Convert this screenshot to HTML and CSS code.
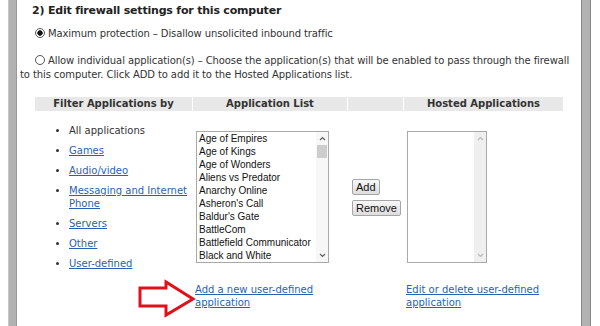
FILE: index.html
```html
<!DOCTYPE html>
<html lang="en">
<head>
  <meta charset="UTF-8" />
  <meta name="viewport" content="width=device-width, initial-scale=1.0" />
  <title>Firewall Settings</title>
  <link rel="stylesheet" href="styles.css">
</head>
<body>
  <div class="page">
    <div class="rail"></div>
    <div class="panel">
      <h2 class="step-title">2) Edit firewall settings for this computer</h2>
      <p class="option"><span class="radio checked"></span>Maximum protection – Disallow unsolicited inbound traffic</p>
      <p class="option second"><span class="radio"></span>Allow individual application(s) – Choose the application(s) that will be enabled to pass through the firewall<br>to this computer. Click ADD to add it to the Hosted Applications list.</p>

      <div class="apps">
        <div class="head">Filter Applications by</div>
        <div class="head">Application List</div>
        <div class="head"></div>
        <div class="head">Hosted Applications</div>

        <ul class="filters">
          <li>All applications</li>
          <li><a href="#">Games</a></li>
          <li><a href="#">Audio/video</a></li>
          <li><a href="#">Messaging and Internet Phone</a></li>
          <li><a href="#">Servers</a></li>
          <li><a href="#">Other</a></li>
          <li><a href="#">User-defined</a></li>
        </ul>

        <div class="listbox app-list">
          <div class="items">
            <div>Age of Empires</div>
            <div>Age of Kings</div>
            <div>Age of Wonders</div>
            <div>Aliens vs Predator</div>
            <div>Anarchy Online</div>
            <div>Asheron's Call</div>
            <div>Baldur's Gate</div>
            <div>BattleCom</div>
            <div>Battlefield Communicator</div>
            <div>Black and White</div>
          </div>
          <div class="scroll">
            <span class="arrow"><svg width="7" height="5" viewBox="0 0 7 5"><path d="M1 4 L3.5 1.5 L6 4" /></svg></span>
            <span class="thumb"></span>
            <span class="spacer"></span>
            <span class="arrow"><svg width="7" height="5" viewBox="0 0 7 5"><path d="M1 1 L3.5 3.5 L6 1" /></svg></span>
          </div>
        </div>

        <div class="moves">
          <button>Add</button>
          <button>Remove</button>
        </div>

        <div class="listbox hosted">
          <div class="items"></div>
          <div class="scroll disabled">
            <span class="arrow"><svg width="7" height="5" viewBox="0 0 7 5"><path d="M1 4 L3.5 1.5 L6 4" /></svg></span>
            <span class="spacer"></span>
            <span class="arrow"><svg width="7" height="5" viewBox="0 0 7 5"><path d="M1 1 L3.5 3.5 L6 1" /></svg></span>
          </div>
        </div>

        <div class="pointer">
          <svg width="60" height="42" viewBox="0 0 60 42">
            <polygon points="3,10 29,10 29,4 56,21 29,37 29,28 3,28" />
          </svg>
        </div>
        <a class="more" href="#">Add a new user-defined application</a>
        <div></div>
        <a class="more" href="#">Edit or delete user-defined application</a>
      </div>
    </div>
    <div class="rail right"></div>
  </div>
</body>
</html>
```

FILE: styles.css
```css
body {
  margin: 0;
  font-family: "DejaVu Sans", sans-serif;
  font-size: 10px;
  color: #333;
  background: #fff;
}
a {
  color: #2b5fb4;
}
.page {
  display: flex;
  height: 326px;
  padding-left: 8px;
}
.rail {
  width: 7px;
  background: #b2b2b2;
  border-left: 1px solid #c6c6c6;
  border-right: 1px solid #999;
}
.rail.right {
  width: 8px;
  border-left: 1px solid #888;
  border-right: 1px solid #888;
}
.panel {
  width: 561px;
  padding: 4px 0 0 3px;
}
.step-title {
  margin: 0 0 0 12px;
  font-size: 11px;
  font-weight: bold;
  letter-spacing: -0.2px;
  line-height: 14px;
  color: #222;
}
.option {
  margin: 9px 0 0;
  text-indent: 15px;
  line-height: 14px;
  white-space: nowrap;
  letter-spacing: -0.1px;
}
.option.second {
  margin-top: 13px;
}
.radio {
  display: inline-block;
  box-sizing: border-box;
  width: 10px;
  height: 10px;
  margin-right: 3px;
  border: 1px solid #555;
  border-radius: 50%;
  background: #fff;
  vertical-align: -1px;
}
.radio.checked {
  background: radial-gradient(circle, #111 2.4px, #fff 3px);
}
.apps {
  display: grid;
  grid-template-columns: 157px 154px 55px 159px;
  column-gap: 1px;
  margin: 15px 0 0 15px;
}
.head {
  height: 14px;
  line-height: 14px;
  background: #e8e8e8;
  font-weight: bold;
  text-align: center;
}
.filters {
  margin: 13px 0 0;
  padding-left: 34px;
  line-height: 13px;
}
.filters li + li {
  margin-top: 7px;
}
.listbox {
  display: flex;
  box-sizing: border-box;
  height: 132px;
  margin: 20px 0 0 3px;
  border: 1px solid #a9a9a9;
  background: #fff;
}
.app-list {
  width: 133px;
}
.hosted {
  width: 80px;
}
.items {
  flex: 1;
  overflow: hidden;
  padding-left: 2px;
  font-family: "Liberation Sans", Arial, sans-serif;
  font-size: 10px;
  line-height: 13px;
  color: #111;
  white-space: nowrap;
}
.scroll {
  display: flex;
  flex-direction: column;
  width: 12px;
  background: #f7f7f7;
}
.scroll.disabled {
  background: #efefef;
}
.arrow {
  display: flex;
  align-items: center;
  justify-content: center;
  height: 13px;
}
.arrow path {
  fill: none;
  stroke: #606060;
  stroke-width: 1.2;
}
.disabled .arrow path {
  stroke: #b8b8b8;
}
.thumb {
  height: 13px;
  margin: 0 1px;
  background: #cdcdcd;
}
.spacer {
  flex: 1;
}
.moves {
  display: flex;
  flex-direction: column;
  align-items: flex-start;
  gap: 5px;
  margin: 68px 0 0 4px;
}
.moves button {
  height: 16px;
  margin: 0;
  padding: 0 3px;
  border: 1px solid #a5a5a5;
  border-radius: 2px;
  background: linear-gradient(#f7f7f7, #dddddd);
  font-family: "Liberation Sans", Arial, sans-serif;
  font-size: 11px;
  color: #111;
}
.pointer {
  justify-self: end;
  margin: 8px -5px 0 0;
}
.pointer svg {
  display: block;
}
.pointer polygon {
  fill: #fff;
  stroke: #e1111b;
  stroke-width: 3;
  stroke-linejoin: miter;
}
.more {
  margin: 13px 0 0 2px;
  line-height: 13px;
}
```
